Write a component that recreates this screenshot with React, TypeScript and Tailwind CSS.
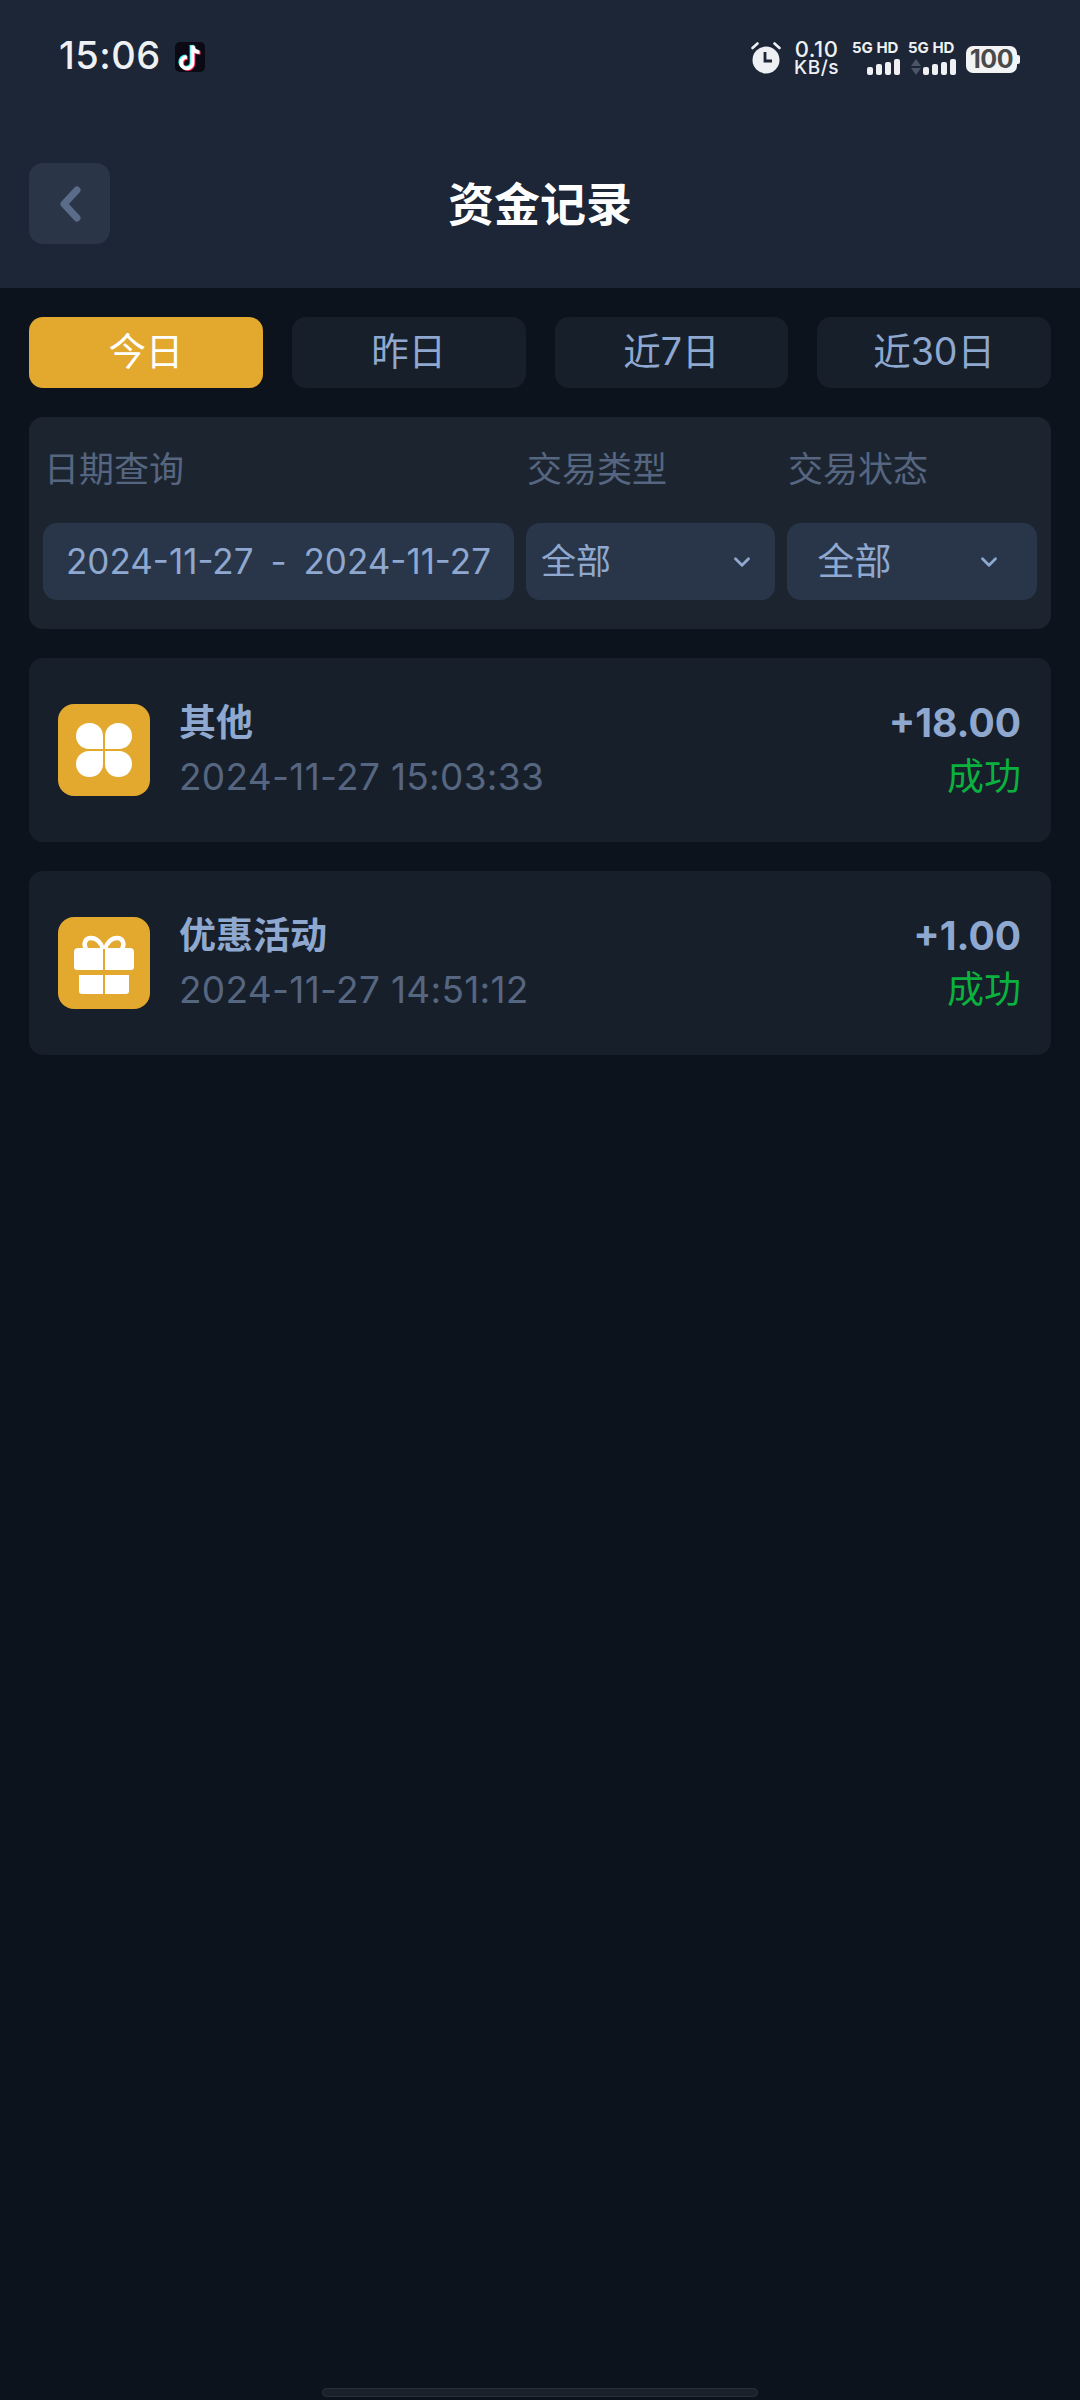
import { ChevronDown } from 'lucide-react'

const font = 'font-["Inter","Noto_Sans_CJK_SC",sans-serif]'

const ranges = ['今日', '昨日', '近7日', '近30日']

const records = [
  { title: '其他', time: '2024-11-27 15:03:33', amount: '+18.00', status: '成功', icon: 'clover' },
  { title: '优惠活动', time: '2024-11-27 14:51:12', amount: '+1.00', status: '成功', icon: 'gift' },
]

function TikTokIcon() {
  const note = 'M14 3v13.5a4.5 4.5 0 1 1-4.5-4.5'
  const flag = 'M14 3c.4 3 2.4 5 5.6 5.2'
  return (
    <div className="flex h-[30px] w-[30px] items-center justify-center rounded-[5px] bg-[#0b0a14]">
      <svg viewBox="0 0 24 24" className="h-[30px] w-[30px]" fill="none" strokeWidth="3">
        <g stroke="#25f4ee" transform="translate(-0.8 -0.6)">
          <path d={note} />
          <path d={flag} />
        </g>
        <g stroke="#fe2c55" transform="translate(0.8 0.6)">
          <path d={note} />
          <path d={flag} />
        </g>
        <g stroke="#ffffff">
          <path d={note} />
          <path d={flag} />
        </g>
      </svg>
    </div>
  )
}

function AlarmIcon() {
  return (
    <svg viewBox="0 0 30 33" className="h-[33px] w-[30px]">
      <circle cx="15" cy="19" r="13.5" fill="#eef0f4" />
      <path d="M14 11v9h7" fill="none" stroke="#1c2636" strokeWidth="2.8" />
      <path d="M1.5 7l5-4.5M28.5 7l-5-4.5" fill="none" stroke="#eef0f4" strokeWidth="2.6" strokeLinecap="round" />
    </svg>
  )
}

function Signal({ arrows }: { arrows?: boolean }) {
  return (
    <div className="flex items-end justify-end gap-[3px]">
      {arrows && (
        <svg viewBox="0 0 10 16" className="mr-[-1px] h-[16px] w-[10px]" fill="#4b5565">
          <path d="M5 0l5 7H0zM5 16l5-7H0z" />
        </svg>
      )}
      <div className="h-[8px] w-[6px] rounded-[2px] bg-[#eef0f4]" />
      <div className="h-[11px] w-[6px] rounded-[2px] bg-[#eef0f4]" />
      <div className="h-[13px] w-[6px] rounded-[2px] bg-[#eef0f4]" />
      <div className="h-[16px] w-[6px] rounded-[2px] bg-[#eef0f4]" />
    </div>
  )
}

function SimBlock({ arrows }: { arrows?: boolean }) {
  return (
    <div className="flex w-[48px] flex-col gap-[3px]">
      <span className="text-[15px] leading-[16px] font-bold whitespace-nowrap text-[#eef0f4]">5G HD</span>
      <Signal arrows={arrows} />
    </div>
  )
}

function StatusBar() {
  return (
    <div className="flex h-[114px] items-center justify-between pr-[60px] pl-[59px]">
      <div className="flex items-center gap-[14px]">
        <span className="mb-[4px] text-[38px] leading-none font-medium tracking-[0.5px] text-[#eef0f4]">15:06</span>
        <TikTokIcon />
      </div>
      <div className="flex items-center">
        <AlarmIcon />
        <div className="ml-[13px] flex w-[45px] flex-col items-center text-[#eef0f4]">
          <span className="text-[22px] leading-[20px] font-medium tracking-[0.5px]">0.10</span>
          <span className="text-[19px] leading-[17px] font-medium tracking-[0.5px]">KB/s</span>
        </div>
        <div className="ml-[13px] flex gap-[8px]">
          <SimBlock />
          <SimBlock arrows />
        </div>
        <div className="mt-[5px] ml-[10px] flex items-center">
          <div className="flex h-[27px] w-[51px] items-center justify-center rounded-[7px] bg-[#f2f3f5] text-[25px] leading-none font-bold tracking-[-0.5px] text-[#4a4a4a]">
            100
          </div>
          <div className="h-[9px] w-[3px] rounded-r-[2px] bg-[#f2f3f5]" />
        </div>
      </div>
    </div>
  )
}

function CloverIcon() {
  return (
    <svg viewBox="0 0 56 56" className="h-[56px] w-[56px]" fill="#ffffff">
      <path d="M27 27H13a13 13 0 0 1 0-26h1a13 13 0 0 1 13 13z" />
      <path d="M29 27h14a13 13 0 0 0 0-26h-1a13 13 0 0 0-13 13z" />
      <path d="M27 29H13a13 13 0 0 0 0 26h1a13 13 0 0 0 13-13z" />
      <path d="M29 29h14a13 13 0 0 1 0 26h-1a13 13 0 0 1-13-13z" />
    </svg>
  )
}

function GiftIcon() {
  return (
    <svg viewBox="0 0 92 92" className="h-[92px] w-[92px]" fill="#ffffff">
      <path d="M45 31H20a4 4 0 0 0-4 4v15a3 3 0 0 0 3 3h26z" />
      <path d="M47 31h25a4 4 0 0 1 4 4v15a3 3 0 0 1-3 3H47z" />
      <path d="M21 58h24v19H24a3 3 0 0 1-3-3z" />
      <path d="M47 58h24v16a3 3 0 0 1-3 3H47z" />
      <path
        d="M45 32c-2-7-7-11-12-11-6 0-8 6-5 11M47 32c2-7 7-11 12-11 6 0 8 6 5 11"
        fill="none"
        stroke="#ffffff"
        strokeWidth="4.5"
      />
    </svg>
  )
}

function FilterSelect({ label, wide }: { label: string; wide?: boolean }) {
  return (
    <div
      className={`flex h-[77px] w-[250px] items-center justify-between rounded-[14px] bg-[#29364a] ${
        wide ? 'pr-[35px] pl-[30px]' : 'pr-[20px] pl-[15px]'
      }`}
    >
      <span className={`text-[#8fa8cf] ${wide ? 'text-[37px]' : 'text-[35px]'}`}>{label}</span>
      <ChevronDown className="h-[26px] w-[26px] text-[#8fa8cf]" strokeWidth={2.6} />
    </div>
  )
}

export default function App() {
  return (
    <div className={`flex h-[2400px] flex-col overflow-hidden bg-[#0c131d] ${font}`}>
      <header className="h-[288px] shrink-0 bg-[#1c2636]">
        <StatusBar />
        <div className="relative mt-[49px] flex h-[81px] items-center justify-center">
          <button className="absolute top-0 left-[29px] flex h-[81px] w-[81px] items-center justify-center rounded-[14px] bg-[#2a3547]">
            <svg viewBox="0 0 24 36" className="h-[36px] w-[24px]" fill="none" stroke="#5a6c8a" strokeWidth="7" strokeLinecap="round" strokeLinejoin="round">
              <path d="M19 4L6 18l13 14" />
            </svg>
          </button>
          <h1 className="text-[46px] leading-none font-bold text-white">资金记录</h1>
        </div>
      </header>

      <main className="flex flex-col px-[29px] pt-[29px]">
        <div className="flex gap-[29px]">
          {ranges.map((range, i) => (
            <div
              key={range}
              className={`flex h-[71px] flex-1 basis-0 items-center justify-center rounded-[14px] text-[37.5px] ${
                i === 0 ? 'bg-[#e3a82e] text-white' : 'bg-[#171f2b] text-[#8fa8cf]'
              }`}
            >
              {range}
            </div>
          ))}
        </div>

        <section className="mt-[29px] rounded-[14px] bg-[#1c2430] px-[14px] pt-[29px] pb-[29px]">
          <div className="flex text-[35px] leading-[46px] text-[#566680]">
            <span className="w-[483px] pl-[1px]">日期查询</span>
            <span className="w-[262px] pl-[1px]">交易类型</span>
            <span>交易状态</span>
          </div>
          <div className="mt-[31px] flex gap-[12px]">
            <div className="flex h-[77px] w-[472px] items-center justify-between rounded-[14px] bg-[#29364a] px-[23px] text-[35px] text-[#8fa8cf]">
              <span>2024-11-27</span>
              <span>-</span>
              <span>2024-11-27</span>
            </div>
            <FilterSelect label="全部" />
            <FilterSelect label="全部" wide />
          </div>
        </section>

        <div className="mt-[29px] flex flex-col gap-[29px]">
          {records.map(record => (
            <article key={record.time} className="flex h-[184px] items-center rounded-[14px] bg-[#171f2b] pr-[30px] pl-[29px]">
              <div className="flex h-[92px] w-[92px] items-center justify-center rounded-[16px] bg-[#e3a82e]">
                {record.icon === 'clover' ? <CloverIcon /> : <GiftIcon />}
              </div>
              <div className="ml-[29px] flex flex-col gap-[8px]">
                <span className="text-[37px] leading-[46px] font-bold text-[#8fa8cf]">{record.title}</span>
                <span className="text-[37px] leading-[46px] tracking-[0.3px] text-[#566680]">{record.time}</span>
              </div>
              <div className="ml-auto flex flex-col items-end gap-[8px]">
                <span className="text-[39px] leading-[46px] font-bold text-[#8fa8cf]">{record.amount}</span>
                <span className="text-[37px] leading-[46px] text-[#0bb13e]">{record.status}</span>
              </div>
            </article>
          ))}
        </div>
      </main>

      <div className="mt-auto mb-[3px] h-[9px] w-[436px] self-center rounded-full border border-[#2a303a] bg-[#1a212b]" />
    </div>
  )
}
